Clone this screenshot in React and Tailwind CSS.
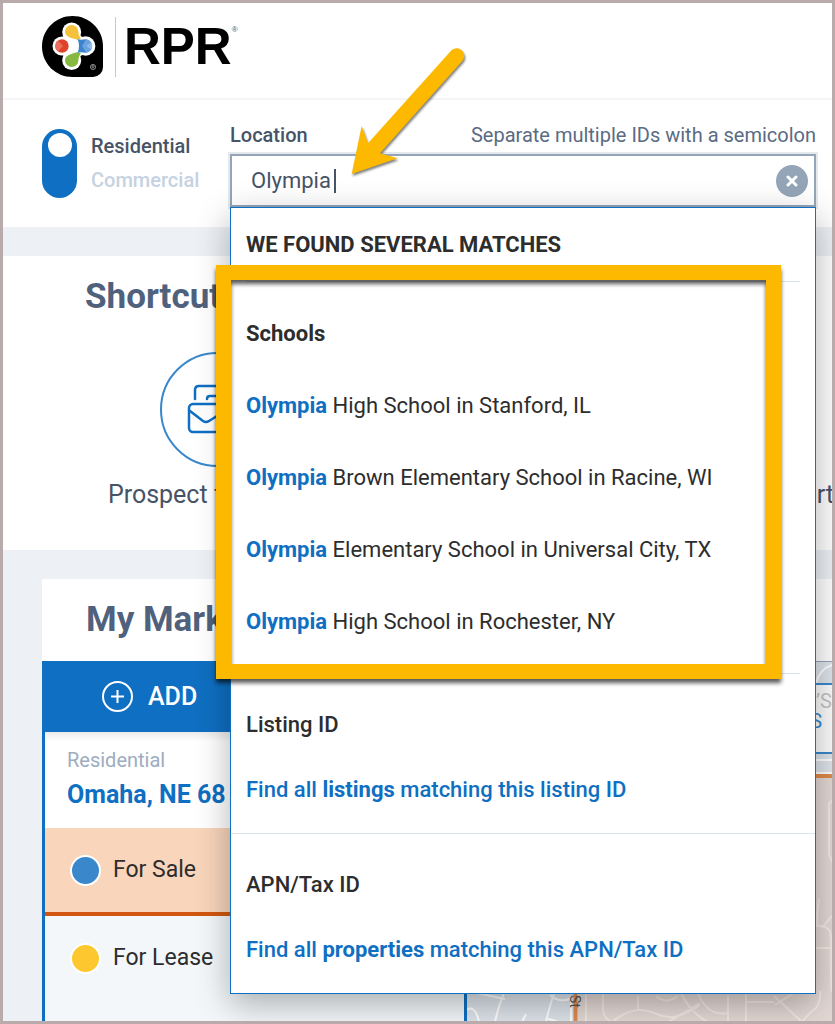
import { useState } from "react";

const schools = [
  { id: 1, match: "Olympia", rest: "High School in Stanford, IL" },
  { id: 2, match: "Olympia", rest: "Brown Elementary School in Racine, WI" },
  { id: 3, match: "Olympia", rest: "Elementary School in Universal City, TX" },
  { id: 4, match: "Olympia", rest: "High School in Rochester, NY" },
];

const idMatches = [
  { title: "Listing ID", noun: "listings", target: "listing ID" },
  { title: "APN/Tax ID", noun: "properties", target: "APN/Tax ID" },
];

const Logo = () => (
  <div className="flex items-center">
    <svg width="61" height="61" viewBox="42 16 61 61" aria-hidden="true">
      <path d="M72.5 16C89.5 16 103 29.5 103 46.5V67a10 10 0 0 1-10 10H72.5C55.5 77 42 63.5 42 46.5S55.5 16 72.5 16Z" fill="#000" />
      <g fill="#fff">
        <circle cx="71.700" cy="32" r="9.500" />
        <circle cx="62" cy="46" r="9.500" />
        <circle cx="85.700" cy="46" r="9.700" />
        <circle cx="71.700" cy="60.500" r="9.500" />
        <path d="M63 36C66 40 66 52 63 56L70 62 80 57C82 54 84 55 88 55V37C84 37 82 38 80 35L70 30Z" />
      </g>
      <path d="M77.500 39.700C74 38.800 65 37.500 65 31.800a6.700 6.700 0 0 1 13.400 0C78.400 34.500 79.500 37 81 38.500Z" fill="#f4c23c" />
      <path d="M77.500 52.300C74 53.200 65 54.500 65 60.200a6.700 6.700 0 0 0 13.400 0C78.400 57.500 79.500 55 81 53.500Z" fill="#86b940" />
      <circle cx="62" cy="46" r="6.700" fill="#e0432b" />
      <path d="M58 40.500l5 5.500-5 5.500a6.700 6.700 0 0 1 0-11Z" fill="#e96f58" />
      <path d="M77.500 39C80.500 40.500 83 39.300 85.500 39.300a6.700 6.700 0 0 1 0 13.400C83 52.700 80.500 51.500 77.500 53 79.500 49 79.500 43 77.500 39Z" fill="#3b83cf" />
      <path d="M86 39.500l-4 6.500 4 6.500a6.400 6.400 0 0 0 5-3L86 46l5-3.500a6.400 6.400 0 0 0-5-3Z" fill="#6ba3de" />
      <path d="M86 46l5-3.500a6.400 6.400 0 0 1 0 7Z" fill="#92bdea" />
      <circle cx="93" cy="67" r="2.600" fill="none" stroke="#bbb" strokeWidth=".7" />
      <path d="M92.200 68.500v-3h1q1 .1 1 .9t-1 .9h-1m1 0 1 1.200" fill="none" stroke="#bbb" strokeWidth=".6" />
    </svg>
    <span className="ml-3 h-[60px] w-px bg-[#c8c8c8]" />
    <span className="ml-2 font-['Liberation_Sans',sans-serif] text-[51px] font-bold leading-[60px] text-black">
      RPR
    </span>
    <span className="self-start pt-2 font-['Liberation_Sans',sans-serif] text-[8px] text-gray-600">®</span>
  </div>
);

const MailStack = () => (
  <svg
    width="62"
    height="52"
    viewBox="0 0 62 52"
    fill="none"
    stroke="#0f6fc2"
    strokeWidth="2.500"
    strokeLinecap="round"
    strokeLinejoin="round"
    aria-hidden="true"
  >
    <rect x="2" y="20" width="37" height="28" rx="4" />
    <path d="M3 27l13 10q3 2 6 0l16-10" />
    <path d="M8 15V6q0-4 4-4h26q5 0 5 4v5" />
    <path d="M20 15q0-3 3-3h33q4 0 4 4v21q0 3-4 3H45" />
  </svg>
);

const shortcuts = [
  { label: "Prospect for Buyers", icon: <MailStack /> },
  { label: "Market Activity", icon: <MailStack /> },
  { label: "Create a Report", icon: <MailStack /> },
];

// callout arrow pointing at the search term
const Arrow = () => (
  <svg
    className="pointer-events-none absolute -top-[114px] left-[115px] drop-shadow-[1px_2px_1px_rgba(0,0,0,0.5)]"
    width="130"
    height="150"
    viewBox="345 40 130 150"
    aria-hidden="true"
  >
    <path
      d="M351.700 174 361.700 126 368 143.300 451.700 50A7.700 7.700 0 0 1 463 60.200L380 153.300 397.700 158.300Z"
      fill="#fcb900"
    />
  </svg>
);

const StreetMap = () => (
  <svg className="h-full w-full" viewBox="467 660 365 361" preserveAspectRatio="xMaxYMin slice" aria-hidden="true">
    <rect x="467" y="660" width="365" height="361" fill="#dde4ea" />
    <rect x="578" y="776" width="254" height="245" fill="#e3d8d4" />
    <path d="M467 660.500h365" stroke="#94a5b8" />
    <path d="M467 773h365" stroke="#fff" strokeWidth="4" />
    <path d="M467 775h365M575.500 775v246" stroke="#e08a4c" strokeWidth="4" />
    <g fill="none" stroke="#fff" strokeWidth="2">
      <path d="M816 682q4-14 16-18M816 759h16M504 992q-6 14-9 29M465 1010q10-8 14 11M467 990l38 8M555 990q-6 16-9 31M522 1021l4-8M546 1017l12 4M550 994q8 8 20 4M571 995v26" />
    </g>
    <g fill="none" stroke="#f3e8e2" strokeWidth="2">
      <path d="M586 990v31M603 990v18q0 8 8 13M638 995v14" />
      <path d="M612 1021q22-18 42-9 12 5 20 4 14-3 26-12M656 995q10 9 22 0M680 990q10 22 28 31M668 1021l32-19M697 990q10 26 30 22M728 994v27M746 990v31M746 1001h28M774 995l28 26M797 990l-22 14M802 1021q6-8 14-14 5-6 4-17" />
      <path d="M832 800q-4 2-3 8v46l4 8M816 925h6q10 2 9 14v40q0 6 1 12M832 915l-10 12M816 947h15M819 898q-2 14-2 27" />
    </g>
    <text
      transform="translate(570 994) rotate(90)"
      className="fill-[#555] font-['Roboto',sans-serif] text-[14px]"
    >
      St
    </text>
  </svg>
);

const App = () => {
  const [query, setQuery] = useState("Olympia");
  const [commercial, setCommercial] = useState(false);

  return (
    <div className="flex h-screen flex-col overflow-hidden border-3 border-[#b9abab] bg-[#edf1f6] font-['Roboto',sans-serif] text-[#2d2d2d]">
      {/* HEADER */}
      <header className="shrink-0 border-b-2 border-[#f3f4f5] bg-white pb-[21px] pl-[39px] pt-[13px]">
        <Logo />
      </header>

      {/* SEARCH */}
      <section className="flex shrink-0 bg-white pb-5 pl-[39px] pr-4">
        <label className="mr-[27px] mt-[29px] flex w-[161px] shrink-0 cursor-pointer items-start gap-[14px] self-start">
          <input
            type="checkbox"
            role="switch"
            aria-label="Commercial"
            checked={commercial}
            onChange={(e) => setCommercial(e.target.checked)}
            className="peer sr-only"
          />
          <span className="flex h-[69px] w-[35px] shrink-0 justify-center rounded-full bg-[#0f6fc2] pt-1 peer-checked:items-end peer-checked:pb-1">
            <span className="size-6 rounded-full bg-white" />
          </span>
          <span className="text-[20px] font-medium leading-[34px]">
            <span className="block text-[#475366]">Residential</span>
            <span className="block text-[#c5d2e2]">Commercial</span>
          </span>
        </label>

        <div className="min-w-0 flex-1 pt-5">
          <div className="flex justify-between text-[20px] leading-[30px]">
            <label htmlFor="location" className="font-medium text-[#475366]">
              Location
            </label>
            <span className="whitespace-nowrap text-[#5a6b84]">Separate multiple IDs with a semicolon</span>
          </div>

          <div className="relative z-10 mt-1">
            <div className="flex h-[53px] items-center border-2 border-[#94a5b8] bg-white pl-[19px] pr-[6px] ring-2 ring-[#e4e9ee]">
              <input
                id="location"
                type="text"
                value={query}
                onChange={(e) => setQuery(e.target.value)}
                className="w-[79px] bg-transparent text-[22px] text-[#475366] outline-none"
              />
              <span className="ml-1 h-6 w-[2px] bg-[#475366]" />
              <button
                type="button"
                aria-label="Clear"
                onClick={() => setQuery("")}
                className="ml-auto flex size-8 items-center justify-center rounded-full bg-[#94a5b8]"
              >
                <svg width="12" height="12" viewBox="0 0 12 12" stroke="#fff" strokeWidth="3" strokeLinecap="round">
                  <path d="M2 2l8 8M10 2l-8 8" />
                </svg>
              </button>
            </div>

            {/* SUGGESTIONS */}
            <div className="absolute inset-x-0 top-full border border-[#0f6fc2] bg-white text-[22px] shadow-[0_10px_32px_rgba(0,0,0,0.3)]">
              <h2 className="mx-[15px] border-b border-[#dde4ed] font-bold leading-[73px]">
                WE FOUND SEVERAL MATCHES
              </h2>

              <div className="relative px-[15px]">
                <div className="border-b border-[#dde4ed] pb-[15px] pt-4">
                  <h3 className="font-bold leading-[72px]">Schools</h3>
                  <ul>
                    {schools.map((s) => (
                      <li key={s.id}>
                        <a href="#" className="block leading-[72px]">
                          <b className="text-[#0f6fc2]">{s.match}</b> {s.rest}
                        </a>
                      </li>
                    ))}
                  </ul>
                </div>
                {/* highlight box */}
                <div className="pointer-events-none absolute -bottom-[5px] -left-[15px] -top-[17px] right-[34px] border-[15px] border-[#fcb900] drop-shadow-[0_4px_2px_rgba(0,0,0,0.65)]" />
              </div>

              {idMatches.map((m) => (
                <div
                  key={m.title}
                  className="border-b border-[#dde4ed] pb-[23px] pt-[31px] font-medium leading-10 last:border-b-0"
                >
                  <h3 className="px-[15px]">{m.title}</h3>
                  <a href="#" className="mt-[25px] block px-[15px] text-[#0f6fc2]">
                    Find all <b>{m.noun}</b> matching this {m.target}
                  </a>
                </div>
              ))}
            </div>

            <Arrow />
          </div>
        </div>
      </section>

      {/* SHORTCUTS */}
      <section className="mt-[29px] shrink-0 overflow-hidden bg-white pb-[35px]">
        <h2 className="px-[82px] pt-[21px] text-[35px] font-bold leading-10 text-[#4f617c]">Shortcuts</h2>
        <div className="mt-[35px] flex pl-[82px]">
          {shortcuts.map((s) => (
            <a key={s.label} href="#" className="flex w-[265px] shrink-0 flex-col items-center">
              <span className="flex size-[115px] items-center justify-center rounded-full border-2 border-[#3a87cc]">
                {s.icon}
              </span>
              <span className="mt-2 text-[25px] leading-10 text-[#475366]">{s.label}</span>
            </a>
          ))}
        </div>
      </section>

      {/* MARKETS */}
      <section className="ml-[39px] mt-[29px] flex min-h-0 flex-1 flex-col bg-white">
        <h2 className="pl-11 text-[35px] font-bold leading-[82px] text-[#4f617c]">My Markets</h2>
        <div className="flex min-h-0 flex-1">
          <div className="flex w-[425px] shrink-0 flex-col border-x-3 border-[#0f6fc2] bg-[#f3f7fa]">
            <button
              type="button"
              className="flex h-[71px] shrink-0 items-center gap-[15px] bg-[#0f6fc2] pl-[57px] text-[25px] font-medium text-white"
            >
              <svg width="31" height="31" viewBox="0 0 31 31" fill="none" stroke="#fff" strokeWidth="2">
                <circle cx="15.500" cy="15.500" r="14.500" />
                <path d="M15.500 9v13M9 15.500h13" />
              </svg>
              ADD
            </button>
            <div className="h-24 shrink-0 bg-white bg-linear-to-b from-[#ececec] to-white to-10% pl-[22px] pt-3">
              <p className="text-[20px] leading-8 text-[#9dacbf]">Residential</p>
              <a href="#" className="block text-[25px] font-bold leading-[38px] text-[#0f6fc2]">
                Omaha, NE 68
              </a>
            </div>
            <button
              type="button"
              className="flex h-[88px] shrink-0 items-center gap-3 border-b-4 border-[#d2560f] bg-[#f8d5bb] pl-[25px] text-[23px]"
            >
              <span className="size-[31px] rounded-full border-2 border-white bg-[#3a87cc]" />
              For Sale
            </button>
            <button type="button" className="flex h-[84px] shrink-0 items-center gap-3 pl-[25px] text-[23px]">
              <span className="size-[31px] rounded-full border-2 border-white bg-[#fdc82f]" />
              For Lease
            </button>
          </div>

          <div className="relative min-w-0 flex-1 overflow-hidden">
            <StreetMap />
            <div className="absolute left-6 right-0 top-[22px] h-[71px] border-y-2 border-[#3a87cc] bg-white/90 text-right text-[20px] leading-5">
              <p className="pt-[6px] text-[#c4c4c4]">’S</p>
              <p className="pr-[10px] text-[#3a87cc]">S</p>
            </div>
          </div>
        </div>
      </section>
    </div>
  );
};

export default App;
